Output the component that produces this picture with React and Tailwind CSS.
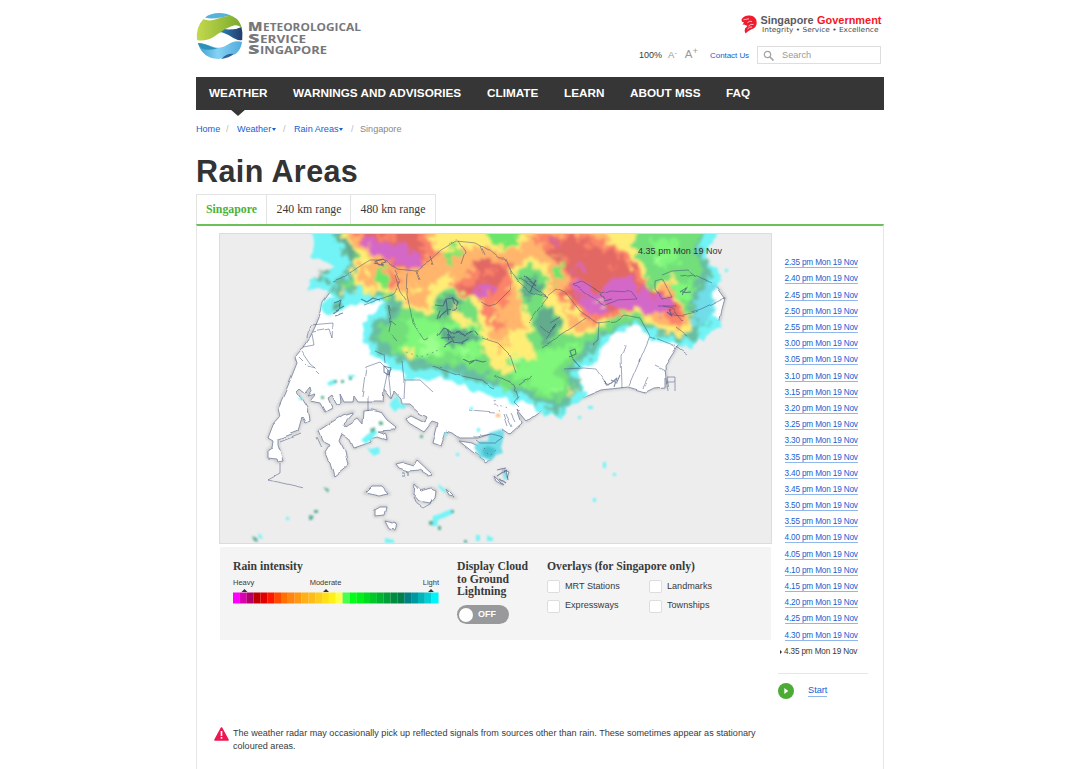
import React from "react";

const nav = ["WEATHER", "WARNINGS AND ADVISORIES", "CLIMATE", "LEARN", "ABOUT MSS", "FAQ"];
const navWidths = ["w-[84px]", "w-[194px]", "w-[77px]", "w-[66px]", "w-[96px]", "w-[40px]"];

const times = [];
for (let m = 155; m <= 275; m += 5) {
  times.push(`${Math.floor(m / 60)}.${String(m % 60).padStart(2, "0")} pm Mon 19 Nov`);
}

const scale = [
  "#ff00ff", "#d800b0", "#b00068", "#c00000", "#e00000", "#ff1800", "#ff4800", "#ff7000", "#ff8410", "#ff9810",
  "#ffb018", "#ffbc18", "#ffcc20", "#ffe018", "#fff018", "#ffff48", "#48ff50", "#00ff18", "#00f018",
  "#00dc20", "#00c828", "#00b430", "#00a038", "#008c40", "#008048", "#008080", "#0098a0", "#00b4b8", "#00d0d8",
  "#00f4f8",
];

function MssLogo() {
  return (
    <svg width="172" height="50" viewBox="194 11 172 50" className="block">
      <defs>
        <linearGradient id="lg" x1="0" x2="1"><stop offset="0" stopColor="#c3d94e" /><stop offset="1" stopColor="#79a92c" /></linearGradient>
        <linearGradient id="lb" x1="0" x2="1"><stop offset="0" stopColor="#3b9fd0" /><stop offset=".45" stopColor="#86d2f5" /><stop offset="1" stopColor="#4fabdc" /></linearGradient>
        <linearGradient id="ld" x1="0" x2="1"><stop offset="0" stopColor="#2b86b8" /><stop offset="1" stopColor="#243a6b" /></linearGradient>
      </defs>
      <path d="M205 17.500C211 12.500 223 11 233 16.500C225 15 214 21 205 17.500Z" fill="#55b2da" />
      <path d="M219 27.500C227 31 236 29 241.500 27Q243 33 242.200 40C235 42 230 33 219 32Z" fill="url(#ld)" />
      <path d="M203.500 19C213 24 222 14 233 16.500Q240 20 241.800 28C238 24 234 25 231 26.500C224 29 221 32 215 36C208 41 201 41 197 40Q195.500 27 203.500 19Z" fill="url(#lg)" />
      <path d="M229 28.500Q234 25.500 239 27.500Q235 30.500 229 28.500Z" fill="#fff" />
      <path d="M198 43C209 43 216 52 227 45C234 40.500 238 41 242 42Q241 50 235 54.500C229 53 224 58.500 218 59Q202 58 198 43Z" fill="url(#lb)" />
      <path d="M198 43C209 44 213 49 219 48Q210 51 203 49Q199 47 198 43Z" fill="#2e91ba" />
      <path d="M221 59Q229 58 234 54Q227 53 221 59Z" fill="#2d6496" />
      <g fill="#77787b" fontFamily="'Open Sans', sans-serif" fontWeight="800">
        <text x="248" y="31" fontSize="13" textLength="14.500" lengthAdjust="spacingAndGlyphs">M</text>
        <text x="263" y="31" fontSize="10.300" fontWeight="700" textLength="98" lengthAdjust="spacingAndGlyphs">ETEOROLOGICAL</text>
        <text x="248" y="42.500" fontSize="13" textLength="11.500" lengthAdjust="spacingAndGlyphs">S</text>
        <text x="260" y="42.500" fontSize="10.300" fontWeight="700" textLength="46" lengthAdjust="spacingAndGlyphs">ERVICE</text>
        <text x="248" y="54" fontSize="13" textLength="11.500" lengthAdjust="spacingAndGlyphs">S</text>
        <text x="260" y="54" fontSize="10.300" fontWeight="700" textLength="67" lengthAdjust="spacingAndGlyphs">INGAPORE</text>
      </g>
    </svg>
  );
}

function GovLogo() {
  return (
    <svg width="142" height="22" viewBox="740 14 142 22" className="block">
      <path d="M741.500 19.500Q744 15 750 15.500Q757 16.500 756.700 23Q756.500 28 751 29.500Q748 31 745.500 33.500Q744 31 745 28.500L747.500 26L744 24.500L742.500 24.800L744 22.500L741.800 21.500Z" fill="#ee1c2e" />
      <path d="M743.500 19.800L749 18.800M747.500 22.500Q750 20.500 752 21.500M748.500 26Q751 23.500 753.500 24.500M747.500 29Q749.500 26.500 752 27" stroke="#fff" strokeWidth=".7" fill="none" />
      <g fontFamily="'Liberation Sans', sans-serif" fontWeight="bold">
        <text x="760.500" y="23.500" fontSize="10.800" fill="#5a5b5d" textLength="53" lengthAdjust="spacingAndGlyphs">Singapore</text>
        <text x="817" y="23.500" fontSize="10.800" fill="#f5161f" textLength="64.500" lengthAdjust="spacingAndGlyphs">Government</text>
      </g>
      <text x="762" y="31.500" fontFamily="'DejaVu Sans', sans-serif" fontSize="7" fill="#4a4a4a" textLength="116.500" lengthAdjust="spacingAndGlyphs">Integrity • Service • Excellence</text>
    </svg>
  );
}

const land =
  "M333 282L331 291L323 302L321 313L315 327L310 337L301 350L295 357L297 363L287 388L278 408L280 417L273 425L268 438L273 441L272 448L268 450L268 458L276 459L277 462L283 461L278 445L278 439L298 431L302 417L305 422L309 420L307 408L302 400L297 391L300 388L306 393L311 387L312 391L308 396L316 394L310 401L320 403L325 412L332 408L328 398L332 395L337 404L341 403L340 394L344 402L353 402L354 396L358 402L383 402L384 389L391 398L394 391L401 399L402 405L410 405L419 413L427 417L425 423L411 416L406 419L409 423L424 432L432 422L438 424L433 443L441 446L446 431L452 433L459 438L478 438L490 434L502 434L503 429L510 434L522 423L517 409L527 421L545 408L562 402L585 397L602 390L628 387L645 392L653 388L666 387L666 378L665 366L677 347L695 330L720 320L721 313L725 298L718 288L706 280L690 270L600 250L400 245Z";

const islands = [
  "M353 412L343 415L318 431L322 441L330 445L325 453L328 460L330 462L334 476L348 465L345 452L339 441L342 433L349 438L354 448L371 442L369 438L376 436L387 440L386 434L377 431L394 430L396 427L387 420L381 412L372 410L364 411L363 424L358 418L345 427L343 424L353 413Z",
  "M396 464L404 462L414 465L417 460L432 474L428 475L420 470L408 471L399 468Z",
  "M365 493L372 486L382 486L389 494L379 496Z",
  "M414 484L420 491L431 488L436 490L435 497L430 503L419 501L413 494Z",
  "M375 510L380 507L386 507L384 515L375 516Z",
  "M385 521L397 524L395 530L389 529Z",
  "M446 489L454 497L449 496Z",
  "M459 441L472 443L487 451L493 455L487 462L474 453Z",
  "M494 476L503 485L496 481ZM503 470L508 472L506 478Z",
];

const coastLines =
  "M333 282L341 279L357 268L370 260L386 260L397 269L416 271L429 261L441 250L456 241L476 243L489 250L499 258L506 258L511 271L520 283L530 292L547 297L557 289L566 293L580 311L597 323L616 321L624 315L640 318L650 336L673 345L687 355M573 284L582 281L602 293L611 290L630 291L636 299L618 300L605 305L590 296ZM655 280L662 278L672 297L662 299L655 289ZM662 275L672 271L688 270L695 275L680 277M695 275L712 283M663 306L672 308L682 320M659 306L675 306M672 314L684 315L700 310L725 298M676 327L688 336M511 271L510 290L496 304L489 306L480 302M520 278L548 298M548 297L540 307L530 321L528 323M550 324L560 318M545 340L556 325L548 333L540 326M586 318L564 333L542 348M599 322L598 340L592 345M408 273L407 295L413 323L424 340L429 338M395 270L400 281L393 294L386 297L364 305M388 305L391 320L389 332L397 341M391 320L396 324M406 300L399 289L395 276M416 271L419 280M458 241L465 252L461 264M433 265L430 256M481 246L485 255M362 397L366 367L380 362L388 370L384 389M388 370L391 397M403 399L404 380L402 361M375 350L384 354L385 363M404 380L420 380L433 392M432 366L457 375L481 380L494 388M482 338L498 343L510 355L516 373M495 376L514 385L518 397L514 402L519 407M519 385L532 376M564 369L584 368L596 369L608 386M622 388L621 356L625 345M629 386L640 360M650 336L639 362M655 365L665 370M669 391L667 377L675 377L675 391M667 382L675 382M643 388L648 378M307 337L310 325L333 323L332 338L329 329L313 332M303 347L314 345L312 334M299 357L308 366L316 368L311 364L302 351M316 371L319 374M280 463L280 474L269 480L304 488M316 437L321 448M280 442L300 434M368 395L368 411M414 497L417 504L423 508L430 504L432 499M476 440L480 443L495 443L503 437L492 434L480 436M512 427L506 414M504 414L508 426M515 421L511 413M470 410L495 412";

const reservoirs =
  "M435 305l8 1l3-7l7-1l5 4l-3 8l-9 1l-7 6M440 311l-3 7M446 299l2 16M452 297l3 8M438 336l6-8l7 5l9-2l5 5l8-5l4 5M444 347l8-5l9 1l7-4M446 330l8 12M441 338l15-1M449 341l-2-12M463 359l6 3l6-2l8 2l4-1M469 364l5-3M333 303l8-3l-3 9l-6 4M335 310l9-5M334 316l9-3M376 261l7-2l3 4l-7 2ZM375 263l9 3M361 299l6 3l6-4l8 2M680 292l8-5M683 295l4-7M682 292l10-1M601 294l4 5M604 301l8-2M604 381l5 4l8-7l-3 9M611 380l6 3l3-7M667 312l5 4l-3-7M524 276l12 10M530 291l6-11M497 470l8-2M497 476l9-6M499 479l6 4M505 470l2 10M569 357l7-3l-1-5l-5 2l2 6l9 10M384 366l6 2l-2 7l-4-3ZM402 473h3v3h-3M407 472h2v4";

function RadarMap() {
  return (
    <svg width="553" height="311" viewBox="219 233 553 311" className="block">
      <defs>
        <filter id="rough" x="-5%" y="-5%" width="110%" height="110%">
          <feTurbulence type="fractalNoise" baseFrequency=".09" numOctaves="2" seed="7" result="n" />
          <feDisplacementMap in="SourceGraphic" in2="n" scale="11" xChannelSelector="R" yChannelSelector="G" />
          <feGaussianBlur stdDeviation="1.3" />
        </filter>
        <filter id="soft" x="-5%" y="-5%" width="110%" height="110%">
          <feTurbulence type="fractalNoise" baseFrequency=".12" numOctaves="3" seed="3" result="n" />
          <feDisplacementMap in="SourceGraphic" in2="n" scale="20" xChannelSelector="G" yChannelSelector="R" />
          <feGaussianBlur stdDeviation="1.7" />
        </filter>
        <filter id="wobble" x="-5%" y="-5%" width="110%" height="110%">
          <feTurbulence type="fractalNoise" baseFrequency=".07" numOctaves="1" seed="5" result="n" />
          <feDisplacementMap in="SourceGraphic" in2="n" scale="4" xChannelSelector="R" yChannelSelector="G" />
        </filter>
        <filter id="dot"><feGaussianBlur stdDeviation=".8" /></filter>
        <filter id="shade"><feGaussianBlur stdDeviation="1.4" /></filter>
      </defs>
      <rect x="219" y="233" width="553" height="311" fill="#ededed" />
      <g fill="none" stroke="#c4c4c4" strokeWidth="2.5" filter="url(#shade)">
        <path d={land} />
        {islands.map((d) => <path key={d} d={d} />)}
      </g>
      <g fill="#fff" stroke="#7f89a5" strokeWidth=".9" strokeLinejoin="round" filter="url(#wobble)">
        <path d={land} />
        {islands.map((d) => <path key={d} d={d} />)}
      </g>
      <path filter="url(#rough)" fill="#72f4f7" d="M310 225L313 243L311 258L325 262L335 267L326 274L309 281L307 289L330 290L333 295L324 302L323 311L332 314L347 307L362 303L385 299L376 312L363 325L365 341L374 357L392 368L409 379L448 379L462 386L480 393L497 396L513 403L524 400L535 405L538 415L552 411L561 419L568 408L580 402L587 394L579 380L578 370L595 364L603 347L613 337L628 328L638 326L650 338L669 343L692 346L712 331L722 328L720 320L713 315L712 293L722 283L719 267L710 265L706 252L716 237L717 225Z" />
      <g filter="url(#soft)">
        <path fill="#68bda0" d="M331 225L341 250L350 262L345 275L333 283L331 292L341 299L350 291L365 286L375 298L390 300L392 310L372 325L372 341L381 352L401 361L421 370L451 372L481 382L505 390L521 394L541 404L560 413L568 403L581 390L573 375L575 364L590 358L600 340L615 331L635 322L652 332L675 339L692 340L706 325L709 316L700 303L705 283L712 275L705 262L700 245L708 225Z" />
        <path fill="#72df7a" d="M338 225L349 252L360 264L354 276L338 284L344 291L360 283L378 295L402 302L398 318L378 326L380 343L400 354L430 364L460 365L490 378L508 386L530 389L545 401L563 400L575 385L565 370L585 350L598 335L625 322L640 320L658 330L688 334L690 315L692 290L704 272L696 250L703 225Z" />
        <path fill="#7ff77a" d="M405 320L425 318L440 325L470 318L482 335L480 360L450 355L425 358L395 350L410 340ZM535 352L556 347L583 340L569 357L556 371L565 385L550 396L530 385L510 378L525 361ZM500 380L510 390L500 387ZM650 240L680 238L678 262L660 268ZM675 285L690 282L692 300L680 300Z" />
        <path fill="#9cff8e" d="M418 340L436 338L438 356L424 352ZM548 388L560 386L556 396ZM512 353L526 352L524 362L514 362ZM655 258L666 256L664 266ZM460 346L472 350L464 356Z" />
        <path fill="#62ab8c" d="M436 300L452 294L463 303L455 313L440 318ZM440 330L470 328L478 340L450 347ZM522 279L536 275L543 290L530 300L520 296ZM538 313L553 308L560 325L547 345L534 330ZM318 274L332 276L333 282L324 281ZM337 236L349 258L357 259L346 235ZM332 301L343 305L334 315ZM388 305L397 310L392 322Z" />
        <path fill="#ffed76" d="M342 225L347 240L360 256L352 268L355 286L366 294L394 292L402 307L428 315L436 300L448 286L463 297L479 307L480 330L482 346L494 371L516 373L508 360L525 356L540 365L533 350L529 340L530 317L520 299L518 273L531 265L546 276L545 301L562 317L560 333L582 339L597 327L619 315L642 314L656 330L684 336L694 321L682 307L674 293L680 278L672 276L648 290L645 268L634 258L636 225Z" />
        <path fill="#ffb56c" d="M346 225L353 244L369 257L359 268L359 282L372 292L381 276L397 290L410 305L426 309L432 285L446 273L466 289L484 299L487 331L500 353L510 345L508 325L525 330L520 303L514 281L512 266L535 256L550 270L548 290L565 308L569 326L585 332L600 319L640 310L658 324L682 330L690 319L674 300L675 282L650 292L641 275L628 256L612 243L590 225L538 225L522 244L500 251L480 245L440 254L438 233L425 225Z" />
        <path fill="#fa8369" d="M348 225L362 243L380 252L390 267L416 272L425 260L443 255L430 245L428 225ZM391 269L402 280L393 294L387 281ZM474 265L500 257L512 268L512 288L505 305L496 305L502 328L492 330L482 309L484 299L460 294L449 283L470 275ZM533 237L556 233L580 232L608 243L630 258L643 275L648 290L664 293L673 299L684 315L680 325L655 312L640 307L606 320L590 322L568 306L560 296L570 283L565 272L562 258L545 249Z" />
        <path fill="#e26764" d="M355 225L366 240L390 255L395 267L415 271L424 256L418 236L420 225ZM474 262L495 260L507 268L502 283L492 293L472 296L458 290L482 282ZM548 240L575 236L605 249L634 266L640 285L672 297L678 316L655 308L636 305L604 317L580 304L562 295L574 284L567 267L550 254Z" />
        <path fill="#fa8369" d="M378 233L396 233L392 242L382 241ZM486 268L494 270L490 279L484 277ZM582 243L592 246L588 254ZM610 262L618 268L608 270ZM560 255L568 258L566 264Z" />
        <path fill="#d468c8" d="M362 238L383 243L405 247L421 256L418 269L406 268L390 257L370 251ZM469 293L484 287L493 287L488 296ZM573 282L584 280L591 292L604 295L610 279L630 276L637 288L654 296L670 299L672 311L660 314L636 308L620 309L606 303L604 315L592 312L582 302L577 296ZM551 243L559 242L558 248ZM572 269L583 265L582 272Z" />
        <path fill="#e26764" d="M586 284L600 284L604 292L594 291Z" />
        <path fill="#6ae66b" d="M478 225L526 225L520 241L504 248L490 240ZM443 255L456 245L459 252L448 267ZM377 269L386 265L387 285L378 286ZM554 280L561 258L565 263L559 282ZM509 262L515 265L514 271Z" />
        <path fill="#ffed76" d="M403 350L412 346L413 358L406 358ZM430 242L440 233L448 244L436 252ZM452 305L466 318L480 325L470 327L456 320ZM562 302L568 299L582 319L578 322ZM596 301L603 300L602 307ZM569 389L576 391L572 398ZM342 286L347 291L342 293ZM366 268L372 272L368 280ZM492 312L498 318L494 326ZM412 283L420 288L414 298ZM530 262L538 266L534 270ZM498 340L506 338L504 350ZM600 233L634 233L630 246L614 242Z" />
        <path fill="#6fdde8" d="M702 284L713 282L714 315L693 330L696 305Z" />
      </g>
      <g fill="#72f4f7" filter="url(#dot)">
        <path fill="#6fdde8" d="M474 447L480 441L488 441L489 433L502 429L504 436L501 447L503 453L496 455L491 461L480 457Z" />
        <path fill="#4cc3cf" d="M482 449L488 446L496 449L494 455L488 458L483 455Z" />
        <path d="M361 440L368 434L374 430L378 432L372 439L366 444ZM366 446L370 449L379 447L380 453L374 456L370 452ZM432 523L433 516L440 514L446 511L452 509L454 513L446 517L438 520L437 526L432 526ZM390 403L397 395L401 405L406 404L405 409L399 408L395 412L390 406ZM438 484L446 490L445 493L439 488ZM603 462h3v6h-3ZM613 473h3v3h-3ZM593 498h3v4h-3ZM588 406h5v3h-5ZM578 416h3v3h-3ZM456 453h3v3h-3ZM477 428h3v4h-3ZM470 407h3v3h-3ZM286 517h3v3h-3ZM258 533l3 2l2 4l-4-1ZM385 538l9 2v3h-9ZM476 535h4v6h-4ZM487 535l6 3v3h-6ZM299 397h3v3h-3ZM327 383l5-3h3v4l-6 2ZM348 375h7v2h-7ZM503 472l4 3v4h-3ZM444 433h3v3h-3ZM725 269h3v3h-3Z" />
        <path fill="#60b09a" d="M252 536l5 2l1 4l-4-1ZM309 515l5 1l-2 4h-3ZM314 510h4v3h-4ZM323 487l6 2l-1 4ZM334 380h3v3h-3ZM341 380h3v3h-3ZM349 377h3v3h-3ZM370 429l5-2v4l-4 2ZM379 421l4 1v3h-4ZM420 435h3v3h-3ZM438 526h3v4h-3ZM429 521h4v4h-4ZM451 510h3v3h-3ZM321 396h3v3h-3ZM464 540h3v3h-3Z" />
        <path fill="#ffb56c" d="M496 414h4v3h-4Z" />
      </g>
      <g fill="none" stroke="#34466f" strokeOpacity=".6" strokeWidth=".8" strokeLinejoin="round" filter="url(#wobble)">
        <path d={coastLines} />
        <path d={reservoirs} strokeWidth="1.1" />
        <path strokeDasharray="1.500 4" d="M406 352L420 357L440 350M483 449L490 456L497 449M495 404L508 408M495 400L500 412" />
      </g>
      <text x="638" y="254" fontFamily="'Liberation Sans', sans-serif" fontSize="9" fill="#333" textLength="84">4.35 pm Mon 19 Nov</text>
      <rect x="219.500" y="233.500" width="552" height="310" fill="none" stroke="#dcdcdc" />
    </svg>
  );
}

function Check({ label }) {
  return (
    <label className="flex h-[13px] items-center gap-[5px] text-[9.1px]">
      <span className="size-[13px] rounded-[2px] border border-[#dddddd] bg-white" />
      {label}
    </label>
  );
}

function Caret() {
  return <span className="ml-[1px] border-x-[2.5px] border-t-[3px] border-x-transparent border-t-[#1561d1]" />;
}

export default function App() {
  return (
    <div className="h-[769px] overflow-hidden bg-white font-['Liberation_Sans',Arial,sans-serif] text-[#3a3a3a]">
      <div className="mx-auto flex h-full w-[688px] flex-col">
        <header className="flex h-[77px] shrink-0 justify-between">
          <div className="-ml-[2px] pt-[11px]"><MssLogo /></div>
          <div className="flex flex-col items-end pr-[3px] pt-[14px]">
            <div className="-mr-[1px]"><GovLogo /></div>
            <div className="mt-[10px] flex h-[18px] items-center text-[9px]">
              <span className="pt-[2px]">100%</span>
              <span className="ml-[6px] pt-[1px] text-[9.5px] text-[#999999]">A<sup className="text-[7px]">-</sup></span>
              <span className="ml-[8px] text-[11.5px] text-[#999999]">A<sup className="text-[9.5px]">+</sup></span>
              <a className="ml-[12px] w-[38px] whitespace-nowrap pt-[2px] text-[8px] tracking-[-0.05px] text-[#1561d1]">Contact Us</a>
              <div className="ml-[9px] flex h-[18px] w-[124px] items-center border border-[#dedede] pl-[5px] text-[9.2px] text-[#999999]">
                <svg width="12" height="12" viewBox="0 0 12 12" className="mr-[7px] mt-[1px]" fill="none" stroke="#a5a5a5" strokeWidth="1.2"><circle cx="4.500" cy="4.500" r="3.200" /><path d="M7 7L10.500 10.500" strokeWidth="1.700" /></svg>
                <span className="pt-[1px]">Search</span>
              </div>
            </div>
          </div>
        </header>

        <nav className="relative flex h-[33px] shrink-0 items-center bg-[#363636] pb-[2px] pl-[13px] text-[11.75px] font-bold text-white">
          {nav.map((n, i) => (
            <a key={n} className={`${navWidths[i]} shrink-0 whitespace-nowrap`}>{n}</a>
          ))}
          <span className="absolute left-[34px] top-[32px] border-x-[8px] border-t-[7px] border-x-transparent border-t-[#363636]" />
        </nav>

        <div className="flex h-[38px] shrink-0 items-center whitespace-nowrap pt-[2px] text-[9.1px] text-[#1561d1]">
          <a className="w-[30px]">Home</a>
          <span className="w-[11px] text-[#bbbbbb]">/</span>
          <a className="flex w-[46px] items-center">Weather<Caret /></a>
          <span className="w-[11px] text-[#bbbbbb]">/</span>
          <a className="flex w-[57px] items-center">Rain Areas<Caret /></a>
          <span className="w-[9px] text-[#bbbbbb]">/</span>
          <span className="text-[#888888]">Singapore</span>
        </div>

        <h1 className="h-[46px] shrink-0 text-[30.5px] font-bold leading-[46px] tracking-[0.4px] text-[#333333]">Rain Areas</h1>

        <div className="flex h-[30px] shrink-0 items-stretch font-['Liberation_Serif',serif] text-[11.8px]">
          <a className="flex w-[71px] items-center justify-center border border-b-0 border-[#e3e3e3] font-bold text-[#4bb236]">Singapore</a>
          <a className="flex w-[84px] items-center justify-center border-r border-t border-[#e3e3e3] pl-[1px]">240 km range</a>
          <a className="flex w-[85px] items-center justify-center border-r border-t border-[#e3e3e3]">480 km range</a>
        </div>

        <main className="flex min-h-0 w-[688px] flex-1 border-x border-t-2 border-x-[#e6e6e6] border-t-[#6cc05a]">
          <div className="flex w-[575px] shrink-0 flex-col pl-[22px] pt-[7px]">
            <RadarMap />
            <section className="ml-px mt-[3px] flex h-[93px] w-[551px] shrink-0 bg-[#f4f4f4] pl-[13px] pt-[13px]">
              <div className="w-[224px]">
                <h2 className="font-['Liberation_Serif',serif] text-[11.7px] font-bold leading-[14px]">Rain intensity</h2>
                <div className="mt-[4px] grid h-[9px] w-[206px] grid-cols-3 text-[7.5px] leading-[9px]">
                  <span>Heavy</span><span className="-ml-[21px] text-center">Moderate</span><span className="text-right">Light</span>
                </div>
                <svg width="206" height="15" viewBox="0 0 206 15" className="mt-[2px] block">
                  <path d="M8.500 3L11.500 0L14.500 3ZM90 3L93 0L96 3ZM195 3L198 0L201 3Z" fill="#333" />
                  {scale.map((c, i) => <rect key={c} x={i * 6.85} y="3.500" width="6.900" height="11" fill={c} />)}
                </svg>
              </div>
              <div className="w-[90px]">
                <h2 className="whitespace-nowrap pt-[1px] font-['Liberation_Serif',serif] text-[11.7px] font-bold leading-[12.7px]">Display Cloud<br />to Ground<br />Lightning</h2>
                <div className="mt-[6px] flex h-[19px] w-[52px] items-center rounded-full bg-[#97999b] pl-[2px] text-[9px] font-bold text-white">
                  <span className="mr-[5px] size-[14px] rounded-full bg-white" />OFF
                </div>
              </div>
              <div>
                <h2 className="whitespace-nowrap font-['Liberation_Serif',serif] text-[11.7px] font-bold leading-[14px]">Overlays (for Singapore only)</h2>
                <div className="mt-[6px] grid grid-cols-[102px_80px] gap-y-[6.5px]">
                  <Check label="MRT Stations" /><Check label="Landmarks" />
                  <Check label="Expressways" /><Check label="Townships" />
                </div>
              </div>
            </section>
            <div className="-ml-[5px] mt-[86px] flex gap-[4px]">
              <svg width="15" height="14" viewBox="0 0 15 14" className="mt-[1px] shrink-0"><path d="M7.500 1L14 13H1Z" fill="#ed174f" stroke="#ed174f" strokeWidth="1.600" strokeLinejoin="round" /><path d="M7.500 4v5M7.500 10v1.700" stroke="#fff" strokeWidth="1.600" /></svg>
              <p className="w-[535px] whitespace-nowrap pt-[1px] text-[9.08px] leading-[13px]">The weather radar may occasionally pick up reflected signals from sources other than rain. These sometimes appear as stationary<br />coloured areas.</p>
            </div>
          </div>
          <aside className="ml-[6px] flex w-[90px] flex-col pt-[29.2px] text-[8.2px] tracking-[-0.15px]">
            {times.map((t, i) => (
              <div key={t} className="flex h-[16.2px] shrink-0 items-center whitespace-nowrap">
                {i === 24 ? <span className="ml-[2px] mr-[2px] border-y-[2.5px] border-l-[2.5px] border-y-transparent border-l-[#333333]" /> : <span className="w-[6.5px]" />}
                <a className={i === 24 ? "leading-[9px]" : "border-b border-[#8fb7ec] leading-[9px] text-[#1561d1]"}>{t}</a>
              </div>
            ))}
            <div className="mt-[13px] border-t border-[#e6e6e6]" />
            <div className="mt-[9px] flex items-center text-[9.2px] tracking-normal">
              <svg width="16" height="16" viewBox="0 0 16 16"><circle cx="8" cy="8" r="8" fill="#4bab35" /><path d="M6.300 5L10.300 8L6.300 11Z" fill="#fff" /></svg>
              <a className="ml-[14px] border-b border-[#8fb7ec] leading-[11px] text-[#1561d1]">Start</a>
            </div>
          </aside>
        </main>
      </div>
    </div>
  );
}
